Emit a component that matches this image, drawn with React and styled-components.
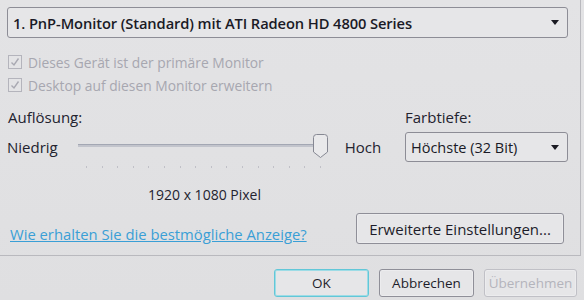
import React from "react";
import styled, { createGlobalStyle } from "styled-components";

const Global = createGlobalStyle`
  html, body { margin: 0; padding: 0; background: #e1e1e3; }
  body { font-family: "Open Sans", "Noto Sans", sans-serif; color: #23232f; }
`;

const Page = styled.div`
  width: 584px;
  height: 300px;
  overflow: hidden;
  background: linear-gradient(180deg, #e3e3e5 0%, #dfdfe1 100%);
  display: flex;
  flex-direction: column;
`;

const Panel = styled.div`
  width: 573px;
  height: 248px;
  padding: 7px 0 0 7px;
  border-right: 1px solid #b9b9be;
  border-bottom: 1px solid #b9b9be;
  display: flex;
  flex-direction: column;
`;

const Select = styled.div`
  box-sizing: border-box;
  width: ${(p) => p.$w}px;
  height: ${(p) => p.$h}px;
  border: 1px solid #8d8d96;
  border-radius: 3px;
  background: #e6e6e8;
  display: flex;
  align-items: center;
  justify-content: space-between;
  padding: 0 8px 0 5px;
  font-size: ${(p) => p.$fs}px;
  font-weight: ${(p) => p.$fw || 400};
  letter-spacing: ${(p) => p.$ls || 0}px;
  color: #1a1a26;
`;

const Arrow = styled.span`
  width: 0;
  height: 0;
  border-left: 4px solid transparent;
  border-right: 4px solid transparent;
  border-top: 5px solid #1a1a22;
`;

const Checks = styled.div`
  display: flex;
  flex-direction: column;
  gap: 7px;
  margin-top: 16px;
  padding-left: 1px;
`;

const CheckRow = styled.label`
  display: flex;
  align-items: center;
  gap: 6px;
  font-size: 13.8px;
  color: #a7a7b0;
  height: 16px;
`;

const Box = styled.span`
  box-sizing: border-box;
  width: 14px;
  height: 14px;
  border: 1px solid #b4b4bc;
  background: #e4e4e6;
  display: flex;
  align-items: center;
  justify-content: center;
`;

const Settings = styled.div`
  display: grid;
  grid-template-columns: 398px 163px;
  margin-top: 14px;
`;

const Label = styled.div`
  font-size: 15px;
  height: 20px;
  line-height: 20px;
  padding-left: ${(p) => p.$pl || 0}px;
`;

const Col = styled.div`
  display: flex;
  flex-direction: column;
`;

const SliderRow = styled.div`
  display: flex;
  align-items: center;
  height: 30px;
  margin-top: 5px;
  font-size: 15px;
`;

const SliderTrack = styled.div`
  position: relative;
  width: 250px;
  height: 30px;
  margin-left: 20px;
  margin-right: 17px;
`;

const Track = styled.div`
  position: absolute;
  left: 0;
  right: 12px;
  top: 12px;
  height: 2px;
  background: #c2c4cc;
  border-top: 1px solid #a3a7b3;
`;

const Thumb = styled.svg`
  position: absolute;
  right: 0;
  top: 2px;
`;

const Ticks = styled.div`
  display: flex;
  gap: 14.6px;
  padding-left: 79px;
  margin-top: 4px;
  height: 2px;
`;

const Tick = styled.span`
  width: 1px;
  height: 2px;
  background: #c0c0c7;
`;

const PixelText = styled.div`
  font-size: 14px;
  margin-top: 17px;
  padding-left: 141px;
`;

const Bottom = styled.div`
  display: flex;
  align-items: center;
  justify-content: space-between;
  margin-top: 9px;
  width: 557px;
`;

const Link = styled.a`
  font-size: 14.8px;
  color: #3a9fd6;
  text-decoration: underline;
  margin-left: 3px;
  margin-top: 11px;
`;

const Button = styled.button`
  box-sizing: border-box;
  width: ${(p) => p.$w}px;
  height: ${(p) => p.$h}px;
  border: 1px solid #8f8f98;
  border-color: ${(p) => (p.$disabled ? "#c0c0c6" : p.$focus ? "#62c7d8" : "#8f8f98")};
  box-shadow: ${(p) => (p.$focus ? "inset 0 0 0 1px #9ddce6" : "inset 0 0 0 1px #ececee")};
  border-radius: 3px;
  background: #e6e6e8;
  font-family: "Open Sans", "Noto Sans", sans-serif;
  font-size: ${(p) => p.$fs || 13.5}px;
  color: ${(p) => (p.$disabled ? "#b4b4bc" : "#1d1d2a")};
  padding: 0;
`;

const Footer = styled.div`
  display: flex;
  gap: 10px;
  padding: 13px 0 0 274px;
`;

export default function App() {
  const ticks = Array.from({ length: 16 });
  return (
    <Page>
      <Global />
      <Panel>
        <Select $w={561} $h={31} $fs={14.7} $fw={600} $ls={-0.1}>
          <span>1. PnP-Monitor (Standard) mit ATI Radeon HD 4800 Series</span>
          <Arrow />
        </Select>
        <Checks>
          <CheckRow>
            <Box>
              <svg width="10" height="10" viewBox="0 0 10 10">
                <path d="M1.5 5.5 L4 8 L8.5 1.5" fill="none" stroke="#a9a9b2" strokeWidth="1.4" />
              </svg>
            </Box>
            Dieses Gerät ist der primäre Monitor
          </CheckRow>
          <CheckRow>
            <Box>
              <svg width="10" height="10" viewBox="0 0 10 10">
                <path d="M1.5 5.5 L4 8 L8.5 1.5" fill="none" stroke="#a9a9b2" strokeWidth="1.4" />
              </svg>
            </Box>
            Desktop auf diesen Monitor erweitern
          </CheckRow>
        </Checks>
        <Settings>
          <Col>
            <Label $pl={1}>Auflösung:</Label>
            <SliderRow>
              <span>Niedrig</span>
              <SliderTrack>
                <Track />
                <Thumb width="15" height="24" viewBox="0 0 15 24">
                  <path
                    d="M3.5 0.5 H11.5 Q14.5 0.5 14.5 3.5 V18 L7.5 23.5 L0.5 18 V3.5 Q0.5 0.5 3.5 0.5 Z"
                    fill="#e9e9eb"
                    stroke="#868893"
                  />
                </Thumb>
              </SliderTrack>
              <span>Hoch</span>
            </SliderRow>
            <Ticks>
              {ticks.map((_, i) => (
                <Tick key={i} />
              ))}
            </Ticks>
            <PixelText>1920 x 1080 Pixel</PixelText>
          </Col>
          <Col>
            <Label>Farbtiefe:</Label>
            <SliderRow>
              <Select $w={163} $h={30} $fs={14.5}>
                <span>Höchste (32 Bit)</span>
                <Arrow />
              </Select>
            </SliderRow>
          </Col>
        </Settings>
        <Bottom>
          <Link>Wie erhalten Sie die bestmögliche Anzeige?</Link>
          <Button $w={208} $h={31} $fs={15}>Erweiterte Einstellungen...</Button>
        </Bottom>
      </Panel>
      <Footer>
        <Button $w={95} $h={28} $focus>OK</Button>
        <Button $w={95} $h={28}>Abbrechen</Button>
        <Button $w={93} $h={28} $disabled>Übernehmen</Button>
      </Footer>
    </Page>
  );
}
